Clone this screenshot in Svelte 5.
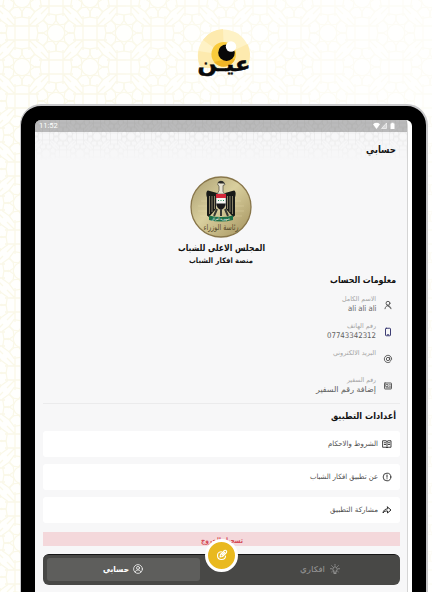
<script>
  const details = [
    { icon: 'user', label: 'الاسم الكامل', lw: 34, value: 'ali ali ali', vw: 28.5, h: 27 },
    { icon: 'phone', label: 'رقم الهاتف', lw: 29, value: '07743342312', vw: 49, h: 27 },
    { icon: 'at', label: 'البريد الالكتروني', lw: 43, value: '', vw: 0, h: 27 },
    { icon: 'card', label: 'رقم السفير', lw: 29, value: 'إضافة رقم السفير', vw: 60, h: 27 }
  ];
  const settings = [
    { icon: 'book', text: 'الشروط والاحكام', w: 50 },
    { icon: 'info', text: 'عن تطبيق افكار الشباب', w: 68 },
    { icon: 'share', text: 'مشاركة التطبيق', w: 48 }
  ];
  const angles = [0, 45, 90, 135, 180, 225, 270, 315];
</script>

{#snippet label(text, w, size, color, weight = 400)}
  <svg class="label" width={w} height="12" viewBox="0 0 {w} 12">
    <text x={w / 2} y="8.6" text-anchor="middle" textLength={w} lengthAdjust="spacingAndGlyphs" font-size={size} font-weight={weight} fill={color}>{text}</text>
  </svg>
{/snippet}

{#snippet icon(name)}
  <svg class="icon" width="10" height="10" viewBox="0 0 20 20" fill="none" stroke="currentColor" stroke-width="1.9" stroke-linecap="round" stroke-linejoin="round">
    {#if name === 'user'}
      <circle cx="10" cy="6.5" r="3.9" /><path d="M4 17.500c.5-3.500 2.500-6 6-6s5.500 2.500 6 6M7.500 9.500l7 6" />
    {:else if name === 'phone'}
      <rect x="5" y="2.500" width="10" height="15" rx="1.500" /><path d="M8.500 15.500h3" />
    {:else if name === 'at'}
      <circle cx="10" cy="10" r="3.300" /><path d="M13.300 7v4c0 3 4 2.500 4-1a7.300 7.300 0 1 0-3 5.900" />
    {:else if name === 'card'}
      <rect x="3" y="4" width="14" height="12" rx="1" /><path d="M6 7h4v4H6zM12.500 7.500H15M12.500 10.500H15M6 13.500h9" stroke-width="1.500" />
    {:else if name === 'book'}
      <path d="M2 3.500h6l2 1.500 2-1.500h6v13h-6l-2 1-2-1H2zM10 5v12M4.500 7.500h3M4.500 11h3M12.500 7.500h3M12.500 11h3" stroke-width="1.700" />
    {:else if name === 'info'}
      <circle cx="10" cy="10" r="7.700" stroke-width="1.700" /><path d="M10 6v4.500M10 13.500v.2" />
    {:else if name === 'share'}
      <path d="M11 4l7 6-7 6v-4c-4-.5-7 .8-9 4 .5-5 4-8 9-8.500z" />
    {:else if name === 'bulb'}
      <path d="M7.500 13.500a4.300 4.300 0 1 1 5 0v3h-5zM10 1v1.500M1 9.500h2M17 9.500h2M3.500 3.500l1.300 1.300M16.500 3.500l-1.300 1.300M8 19h4M3.500 15.500l1.300-1.200M16.500 15.500l-1.300-1.200" stroke-width="1.500" />
    {:else}
      <circle cx="10" cy="10" r="8.800" stroke-width="1.500" /><circle cx="10" cy="7.800" r="3" stroke-width="1.500" /><path d="M4.500 16c.8-3 2.500-4 5.500-4s4.700 1 5.500 4" stroke-width="1.500" />
    {/if}
  </svg>
{/snippet}

{#snippet lattice(id, color, scale)}
  <svg class="lattice" width="100%" height="100%">
    <defs>
      <pattern {id} width="68" height="68" patternUnits="userSpaceOnUse" patternTransform="scale({scale}) translate(22 33)">
        <g fill="none" stroke={color} stroke-width="1.300">
          {#each [[0, 0], [34, 34], [68, 0], [0, 68], [68, 68]] as [x, y]}
            <g transform="translate({x} {y})">
              <path d="M-7-17V17M7-17V17M-17-7H17M-17 7H17M-15-15L-7-7M15-15L7-7M-15 15L-7 7M15 15L7 7" />
            </g>
          {/each}
          {#each [[34, 0], [0, 34], [68, 34], [34, 68]] as [x, y]}
            <g transform="translate({x} {y})">
              <circle r="8.700" />
              {#each angles as a}
                <path transform="rotate({a + 22.5})" d="M0-8.700L5.500-12 6.500-17 0-21-6.500-17-5.500-12z" />
              {/each}
            </g>
          {/each}
        </g>
      </pattern>
    </defs>
    <rect width="100%" height="100%" fill="url(#{id})" />
  </svg>
{/snippet}

<div class="page">
  <div class="backdrop">{@render lattice('gold', '#faf8e8', 1)}</div>
  <header>
    <svg width="56" height="54" viewBox="0 0 56 54">
      <path d="M4 37A26 26 0 1 1 52 36L46 39H8z" fill="#fef2c6" />
      <path d="M28 26L7 11A26 26 0 0 1 27 0zM28 26L51.500 15A26 26 0 0 1 52 36zM28 26L14 39H8L4 37A26 26 0 0 1 2.500 22z" fill="#fdeaae" />
      <circle cx="27.700" cy="25.300" r="12.300" fill="#f9cb3c" />
      <path d="M18 33A12.300 12.300 0 0 0 39 30L31 30z" fill="#f0b526" />
      <circle cx="30.500" cy="23.700" r="8.300" fill="#080808" />
      <circle cx="35" cy="17.500" r="5.200" fill="#fff" />
      <text x="28" y="42" text-anchor="middle" font-size="20" font-weight="700" textLength="53" lengthAdjust="spacingAndGlyphs" fill="#090909" stroke="#090909" stroke-width=".5">عيـن</text>
    </svg>
  </header>

  <div class="tablet">
    <div class="screen">
      <div class="topfade">{@render lattice('grey', '#e3e3e3', 0.5)}</div>
      <div class="status">
        <span>11:52</span>
        <svg width="24" height="8" viewBox="0 0 24 8" fill="#fff"><path d="M0 2.200Q3.500-.5 7 2.200L3.500 7z" /><path d="M13.500 1v5.500H8.500z" fill-opacity=".45" stroke="#fff" stroke-width=".6" /><path d="M17.500 1.500h1V.7h2v.8h1v5.500h-4z" /></svg>
      </div>
      <div class="title">{@render label('حسابي', 30, 10, '#151515', 700)}</div>

      <div class="profile">
        <svg width="62" height="62" viewBox="0 0 62 62">
          <defs><linearGradient id="disc" x2="1" y2="1"><stop stop-color="#a99d70" /><stop offset=".45" stop-color="#d9cf9e" /><stop offset="1" stop-color="#a2905b" /></linearGradient></defs>
          <circle cx="31" cy="31" r="30" fill="url(#disc)" stroke="#88764a" stroke-width="1.300" />
          <path d="M11 25h40M8 30h46M8 35h46M10 40h42" stroke="#eee2b5" stroke-width=".5" opacity=".6" />
          <path d="M27 17L18 14.500c-2 .5-2 4-1 7v18l2 1.500 7-8V21zM35 17l9-2.500c2 .5 2 4 1 7v18l-2 1.500-7-8V21z" fill="#181a17" />
          <path d="M19.500 20v18M22 20v16M24.500 20v13M37.500 20v13M40 20v16M42.500 20v18" stroke="#b8ae87" stroke-width=".7" />
          <path d="M27.500 8q2-3.500 5.500-2.500l2 3-2 1v6l2 3h-8l2-4v-4z" fill="#e8e3d1" stroke="#33342f" stroke-width=".6" />
          <path d="M27.500 6.500q3-3 5.500-1l2 2h-5z" fill="#292a27" />
          <path d="M26 18h10v10q-1 4-5 6-4-2-5-6z" fill="#f6f6f2" stroke="#333" stroke-width=".5" />
          <path d="M26 18h10v4H26z" fill="#d5273a" /><path d="M26.200 27.500h9.600q-1 5-4.800 6.500-4-1.500-4.800-6.500z" fill="#1a1a1a" />
          <path d="M28 24.500h1M30.500 24.500h1M33 24.500h1" stroke="#28905d" />
          <path d="M27 33l-3 7M35 33l3 7M31 34v6" stroke="#373933" stroke-width="2" />
          <path d="M19 39.500q12 3 24 0v4.500q-12 3-24 0z" fill="#1c7048" />
          <text x="31" y="44.200" text-anchor="middle" font-size="3.600" textLength="18" lengthAdjust="spacingAndGlyphs" fill="#fff">جمهورية العراق</text>
          <text x="31" y="53.500" text-anchor="middle" font-size="8.500" textLength="35" lengthAdjust="spacingAndGlyphs" fill="#574b2b">رئاسة الوزراء</text>
        </svg>
        <div class="name">{@render label('المجلس الاعلى للشباب', 87, 9, '#111', 700)}</div>
        {@render label('منصة افكار الشباب', 64, 7.5, '#161616', 700)}
      </div>

      <div class="heading">{@render label('معلومات الحساب', 66, 9, '#111', 700)}</div>
      <div class="details">
        {#each details as d}
          <div class="detail" class:blue={d.icon === 'phone'} style:height="{d.h}px">
            {@render icon(d.icon)}
            <div class="lines">
              {@render label(d.label, d.lw, 6.5, '#a5a5a5')}
              {#if d.value}{@render label(d.value, d.vw, 7.8, '#606060')}{/if}
            </div>
          </div>
        {/each}
      </div>

      <div class="heading second">{@render label('أعدادات التطبيق', 65, 9, '#111', 700)}</div>
      <div class="cards">
        {#each settings as s}
          <div class="card">{@render icon(s.icon)}{@render label(s.text, s.w, 7.2, '#505050')}</div>
        {/each}
      </div>
      <div class="logout">{@render label('تسجيل الخروج', 42, 7.5, '#d54c58', 700)}</div>

      <nav>
        <div class="tab">{@render icon('bulb')}{@render label('افكاري', 25, 8, '#999')}</div>
        <div class="tab active">{@render icon('profile')}{@render label('حسابي', 26, 8.5, '#fff', 700)}</div>
        <div class="fab">
          <svg width="12" height="12" viewBox="0 0 24 24" fill="none" stroke="#fff" stroke-width="2.200" stroke-linecap="round" stroke-linejoin="round"><path d="M11 5.500C6 5.500 3 8.500 3 13s3 8 8 8 8-3 8-7" /><path d="M8 16l1-5 8-8q2-1 3.500.5t.5 3.500l-8 8zM12 12l5-5" /></svg>
        </div>
      </nav>
    </div>
  </div>
</div>

<style>
  :global(body) { margin: 0; background: #fff; }
  .page { position: relative; width: 448px; height: 592px; overflow: hidden; background: #fff; font-family: "DejaVu Sans", "Noto Sans", sans-serif; box-sizing: border-box; }
  .backdrop { position: absolute; inset: 0 16px 0 0; background: #fffffd; -webkit-mask-image: linear-gradient(90deg, #000 20%, rgba(0,0,0,.4) 85%); mask-image: linear-gradient(90deg, #000 20%, rgba(0,0,0,.4) 85%); }
  .lattice, .icon, .label { display: block; flex: none; }
  .label { overflow: visible; }
  header { position: relative; height: 104px; padding: 29px 0 0 196px; box-sizing: border-box; }
  header svg { display: block; overflow: visible; }
  .tablet { position: relative; width: 408px; height: 510px; margin-left: 20px; box-sizing: border-box; padding: 14px 14px 0 13px; border: 2px solid #c9c9cb; border-left-width: 1px; border-right-width: 2px; border-radius: 21px 21px 0 0; background: #000; }
  .screen { position: relative; width: 377px; height: 480px; margin-left: 1px; box-sizing: border-box; background: #f7f7f8; border-radius: 6px 6px 0 0; overflow: hidden; border-right: 4px solid #fff; box-shadow: inset -1px 0 #d5d5d5; padding-right: 1px; }
  .topfade { position: absolute; inset: 0 1px auto 0; height: 54px; -webkit-mask-image: linear-gradient(#000 15%, transparent 75%); mask-image: linear-gradient(#000 15%, transparent 75%); }
  .status { position: relative; height: 12px; background: rgba(130,130,130,.52); display: flex; align-items: center; justify-content: space-between; padding: 0 10px 0 4px; color: #fff; font: 7.5px/12px Roboto, sans-serif; }
  .title { position: relative; height: 36px; display: flex; align-items: center; justify-content: flex-end; padding-right: 11px; }
  .profile { display: flex; flex-direction: column; align-items: center; padding-top: 8px; height: 98px; }
  .name { margin-top: 4px; }
  .heading { height: 12px; display: flex; justify-content: flex-end; padding-right: 11px; }
  .details { direction: rtl; height: 118px; margin: 0 7px 0 8px; padding: 6px 7px 0 0; border-bottom: 1px solid #ebebec; box-sizing: border-box; }
  .detail { display: flex; gap: 7px; color: #555; }
  .detail .icon { margin-top: 8px; }
  .blue { color: #34346e; }
  .lines { display: flex; flex-direction: column; }
  .lines .label + .label { margin-top: -2.500px; }
  .second { padding-top: 6px; height: 20px; box-sizing: border-box; }
  .cards { direction: rtl; padding: 7px 7px 0 8px; display: flex; flex-direction: column; gap: 7.500px; }
  .card { height: 25.500px; background: #fff; border-radius: 3px; display: flex; align-items: center; gap: 4px; padding-right: 8px; color: #222; }
  .card .label { margin-top: -1px; }
  .logout { height: 14px; margin: 9px 7px 0 8px; background: #f4d8db; display: flex; align-items: center; justify-content: center; padding-top: 2px; box-sizing: border-box; }
  nav { direction: rtl; position: relative; height: 31px; margin: 8px 7px 0 8px; box-sizing: border-box; padding: 3px 4px; background: #484846; border: 0 solid #151515; border-top-width: 1px; border-radius: 6px; display: flex; justify-content: space-between; }
  .tab { width: 153px; height: 23px; border-radius: 3px; display: flex; align-items: center; justify-content: center; gap: 5px; color: #aaa; box-sizing: border-box; }
  .tab:first-child { padding-left: 1px; }
  .tab.active { background: #5e5e5c; color: #fff; gap: 4px; padding-right: 2px; }
  .fab { position: absolute; left: 162px; top: -16px; width: 33px; height: 33px; box-sizing: border-box; border-radius: 50%; border: 3px solid #fff; background: #e9b91f; display: flex; align-items: center; justify-content: center; }
</style>
